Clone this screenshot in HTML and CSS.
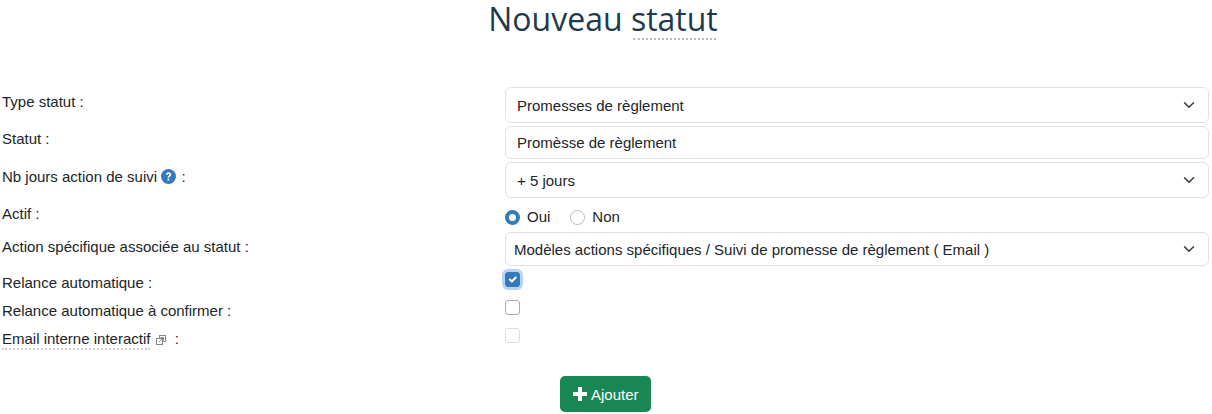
FILE: index.html
```html
<!DOCTYPE html>
<html lang="fr">
<head>
    <meta charset="UTF-8">
    <title>Nouveau statut</title>
    <link rel="stylesheet" href="styles.css">
</head>
<body>
    <h1 class="page-title">Nouveau <span class="dotted">statut</span></h1>

    <form class="status-form">
        <div class="form-row row-type">
            <label class="form-label">Type statut :</label>
            <select class="form-control">
                <option>Promesses de règlement</option>
            </select>
        </div>
        <div class="form-row row-status">
            <label class="form-label">Statut :</label>
            <input class="form-control" type="text" value="Promèsse de règlement">
        </div>
        <div class="form-row row-days">
            <label class="form-label">
                Nb jours action de suivi
                <svg class="help-icon" viewBox="0 0 16 16">
                    <circle cx="8" cy="8" r="8" fill="#337ab7"/>
                    <path d="M5.2 6.2C5.3 4.5 6.5 3.5 8.1 3.5c1.600 0 2.800 1 2.800 2.400 0 1.200-.7 1.700-1.400 2.200-.6.400-.8.700-.8 1.300H7c0-1.200.3-1.700 1.100-2.300.6-.4 1-.7 1-1.200 0-.5-.4-.9-1-.9-.7 0-1.100.4-1.200 1.200zM6.900 10.400h1.900v1.900H6.900z" fill="#fff"/>
                </svg>
                <span class="colon">:</span>
            </label>
            <select class="form-control">
                <option>+ 5 jours</option>
            </select>
        </div>
        <div class="form-row row-active">
            <label class="form-label">Actif :</label>
            <div class="radio-group">
                <label class="radio-item"><input type="radio" name="actif" checked> Oui</label>
                <label class="radio-item"><input type="radio" name="actif"> Non</label>
            </div>
        </div>
        <div class="form-row row-action">
            <label class="form-label">Action spécifique associée au statut :</label>
            <select class="form-control compact">
                <option>Modèles actions spécifiques / Suivi de promesse de règlement ( Email )</option>
            </select>
        </div>
        <div class="form-row row-check row-auto">
            <label class="form-label">Relance automatique :</label>
            <input class="check-input focused" type="checkbox" checked>
        </div>
        <div class="form-row row-check">
            <label class="form-label">Relance automatique à confirmer :</label>
            <input class="check-input" type="checkbox">
        </div>
        <div class="form-row row-check">
            <label class="form-label">
                <span class="dotted-label">Email interne interactif</span>
                <svg class="link-icon" viewBox="0 0 10 10">
                    <rect x="3.500" y="0.500" width="6" height="6" fill="#fff" stroke="#888"/>
                    <rect x="0.500" y="3.500" width="6" height="6" fill="#fff" stroke="#888"/>
                    <path d="M3 7l3.500-3.500M4.500 2.500h3v3" fill="none" stroke="#888"/>
                </svg>
                <span class="colon-far">:</span>
            </label>
            <input class="check-input" type="checkbox" disabled>
        </div>
        <div class="form-actions">
            <button class="btn-add" type="button">
                <svg class="plus-icon" viewBox="0 0 14 14">
                    <path d="M5 0h4v5h5v4H9v5H5V9H0V5h5z" fill="#fff"/>
                </svg>
                Ajouter
            </button>
        </div>
    </form>
</body>
</html>
```

FILE: styles.css
```css
/* General */
body {
    font-family: "Liberation Sans", Arial, sans-serif;
    font-size: 15px;
    margin: 0;
    background-color: #ffffff;
    color: #212529;
    height: 414px;
    overflow: hidden;
}

.page-title {
    font-family: "Open Sans", sans-serif;
    font-size: 32px;
    font-weight: 400;
    line-height: 38px;
    color: #1f3a4d;
    text-align: center;
    margin: 0;
    width: 1206px;
}

.dotted {
    position: relative;
    display: inline-block;
    line-height: 38px;
}

.dotted::after {
    content: "";
    position: absolute;
    left: 2px;
    right: 2px;
    top: 38px;
    border-top: 2px dotted #bbbbbb;
}

/* Form rows */
.status-form {
    margin-top: 49px;
}

.form-row {
    display: flex;
    align-items: flex-start;
    padding-left: 2px;
}

.form-label {
    width: 503px;
    flex-shrink: 0;
    line-height: 16px;
    padding-top: 7px;
}

.form-control {
    appearance: none;
    box-sizing: border-box;
    width: 704px;
    height: 36px;
    padding: 0 12px 0 11px;
    font-family: inherit;
    font-size: 15px;
    color: #212529;
    background-color: #ffffff;
    border: 1px solid #dee2e6;
    border-radius: 6px;
    outline: none;
}

select.form-control {
    background-image: url("data:image/svg+xml,%3csvg xmlns='http://www.w3.org/2000/svg' viewBox='0 0 16 16'%3e%3cpath fill='none' stroke='%23343a40' stroke-linecap='round' stroke-linejoin='round' stroke-width='2' d='m2 5 6 6 6-6'/%3e%3c/svg%3e");
    background-repeat: no-repeat;
    background-position: right 12px center;
    background-size: 14px 12px;
}

.row-status {
    margin-top: 3px;
}

.row-status .form-label {
    padding-top: 5px;
}

.row-status .form-control {
    height: 33px;
}

.row-days {
    margin-top: 3px;
}

.row-active {
    margin-top: 8px;
    height: 26px;
}

.row-active .form-label {
    padding-top: 0;
}

.row-action .form-control {
    height: 34px;
    padding-left: 8px;
}

.help-icon {
    width: 15px;
    height: 15px;
    vertical-align: -2px;
}

.colon {
    margin-left: 1px;
}

/* Radios */
.radio-group {
    display: flex;
    gap: 20px;
    padding-top: 3px;
}

.radio-item {
    display: flex;
    align-items: center;
    gap: 7px;
    font-size: 15px;
    line-height: 16px;
}

.radio-item input {
    appearance: none;
    width: 15px;
    height: 15px;
    margin: 0;
    border: 1px solid #bbbbbb;
    border-radius: 50%;
    background-color: #ffffff;
}

.radio-item input:checked {
    border: 4px solid #337ab7;
}

/* Checkboxes */
.row-check {
    height: 28px;
}

.row-check .form-label {
    padding-top: 7px;
}

.row-auto {
    margin-top: 2px;
}

.check-input {
    appearance: none;
    box-sizing: border-box;
    width: 15px;
    height: 15px;
    margin: 4px 0 0;
    border: 1px solid #aaaaaa;
    border-radius: 3px;
    background-color: #ffffff;
}

.check-input:checked {
    background-color: #337ab7;
    border-color: #337ab7;
    background-image: url("data:image/svg+xml,%3csvg xmlns='http://www.w3.org/2000/svg' viewBox='0 0 20 20'%3e%3cpath fill='none' stroke='%23fff' stroke-linecap='round' stroke-linejoin='round' stroke-width='3' d='m6 10 3 3 6-6'/%3e%3c/svg%3e");
}

.check-input.focused {
    box-shadow: 0 0 0 3px #b9d3f5;
}

.check-input:disabled {
    border-color: #dddddd;
}

.dotted-label {
    border-bottom: 2px dotted #cccccc;
    padding-bottom: 1px;
}

.link-icon {
    width: 10px;
    height: 10px;
    margin-left: 1px;
    vertical-align: -1px;
}

.colon-far {
    margin-left: 5px;
}

/* Button */
.form-actions {
    padding-left: 560px;
    margin-top: 24px;
}

.btn-add {
    display: flex;
    align-items: center;
    gap: 4px;
    height: 36px;
    padding: 0 12px 0 13px;
    font-family: inherit;
    font-size: 15px;
    color: #ffffff;
    background-color: #198754;
    border: none;
    border-radius: 5px;
}

.plus-icon {
    width: 14px;
    height: 14px;
}
```
